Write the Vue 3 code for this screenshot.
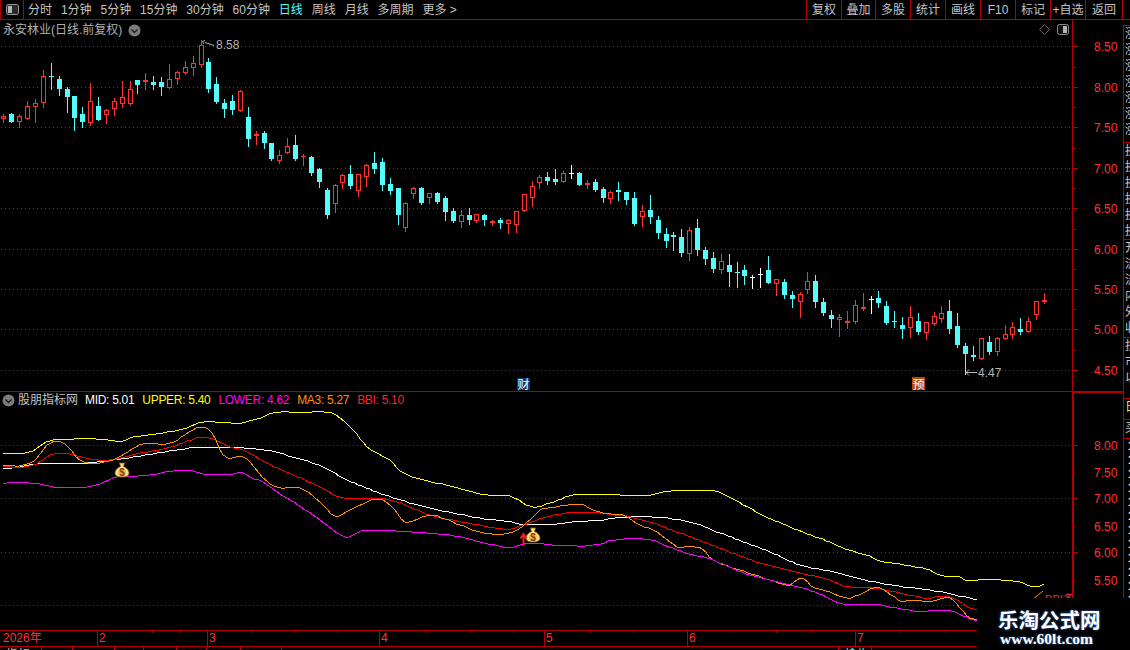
<template>
  <div class="app">
    <header class="toolbar">
      <div class="corner">
        <svg width="13" height="11" viewBox="0 0 13 11">
          <rect x="0.5" y="0.5" width="12" height="10" rx="2" fill="#2a2a2a" stroke="#9a9a9a" />
          <rect x="2" y="2" width="4" height="7" fill="#b4b4b4" />
        </svg>
      </div>
      <nav class="periods">
        <span v-for="p in periods" :key="p" class="period" :class="{ active: p === '日线' }">{{ p }}</span>
        <span class="period">更多 &gt;</span>
      </nav>
      <div class="actions">
        <span v-for="a in actions" :key="a.t" class="action" :style="{ width: a.w + 'px' }">{{ a.t }}</span>
      </div>
    </header>

    <div class="body">
      <div class="charts">
        <section class="panel main-panel">
          <svg class="plot" width="1123" height="371" viewBox="0 20 1123 371">
            <line v-for="g in mainGrid" :key="g.y" class="grid" x1="1" x2="1072" :y1="g.y + 0.5" :y2="g.y + 0.5" />
            <line class="axis" x1="1072.5" x2="1072.5" y1="20" y2="391" />
            <line v-for="g in mainGrid" :key="'t' + g.y" class="axis" x1="1072" x2="1078" :y1="g.y + 0.5" :y2="g.y + 0.5" />
            <line v-for="y in mainMinor" :key="y" class="axis" x1="1072" x2="1076" :y1="y + 0.5" :y2="y + 0.5" />
            <text v-for="g in mainGrid" :key="'l' + g.y" class="scale" x="1094" :y="g.y + 5">{{ g.l }}</text>

            <g v-for="c in candles" :key="c.i">
              <line :class="c.t" class="wick" :x1="c.x + 0.5" :x2="c.x + 0.5" :y1="c.hi" :y2="c.lo + 1" />
              <rect v-if="c.solid" :class="c.t" class="solid" :x="c.x - 2" :y="c.top" width="5" :height="c.h" />
              <rect v-else class="hollow" :x="c.x - 1.5" :y="c.top + 0.5" width="4" :height="c.h - 1" />
            </g>

            <path class="mark" d="M214 45.5 L205 42.5 M205 40.5 L202.5 41.5 L204 44" />
            <text class="peak" x="216" y="49">8.58</text>
            <path class="mark" d="M966 372.5 H977 M969 369.5 L966 372.5 L969 375.5" />
            <text class="peak" x="978" y="377">4.47</text>

            <rect x="517" y="378" width="13" height="12" fill="#0b3d73" />
            <text class="badge" x="517.5" y="389">财</text>
            <rect x="912" y="377" width="13" height="13" fill="#b8460c" />
            <text class="badge" x="912.5" y="388.5">预</text>
          </svg>

          <div class="stock-title">
            <span>永安林业(日线.前复权)</span>
            <svg width="13" height="13" viewBox="0 0 13 13">
              <circle cx="6.5" cy="6.5" r="6" fill="#7c7c7c" />
              <path d="M3.5 5.5 L6.5 8.5 L9.5 5.5" fill="none" stroke="#1c1c1c" stroke-width="1.4" />
            </svg>
          </div>
          <div class="corner-tools">
            <svg width="11" height="11" viewBox="0 0 11 11">
              <path d="M5.5 0.5 L10.5 5.5 L5.5 10.5 L0.5 5.5 Z" fill="none" stroke="#666" />
            </svg>
            <svg width="12" height="11" viewBox="0 0 12 11">
              <rect x="0.5" y="0.5" width="11" height="10" rx="2" fill="#111" stroke="#8a8a8a" />
              <rect x="6" y="2" width="4" height="7" fill="#b4b4b4" />
            </svg>
          </div>
        </section>

        <section class="panel sub-panel">
          <svg class="plot" width="1123" height="238" viewBox="0 392 1123 238">
            <line v-for="y in subDots" :key="y" class="grid" x1="1" x2="1072" :y1="y + 0.5" :y2="y + 0.5" />
            <rect x="1072" y="392" width="2" height="238" class="axis-fill" />
            <rect x="1074" y="392" width="49" height="1" class="axis-fill" />
            <line v-for="g in subScale" :key="'t' + g.y" class="axis" x1="1072" :x2="g.major ? 1078 : 1075" :y1="g.y + 0.5" :y2="g.y + 0.5" />
            <text v-for="g in subScale" :key="g.y" class="scale" x="1094" :y="g.y + 5">{{ g.l }}</text>

            <polyline v-for="s in series" :key="s.name" class="series" :stroke="s.color" :points="s.points" />

            <g v-for="b in bags" :key="b.x" :transform="`translate(${b.x},${b.y})`">
              <path d="M-2.5 -7 L2.5 -7 L1.5 -3.5 C5 -2 7 0.5 7 3 C7 6 4 7 0 7 C-4 7 -7 6 -7 3 C-7 0.5 -5 -2 -1.5 -3.5 Z" fill="#ffe08a" stroke="#8a6414" stroke-width="0.8" />
              <circle cx="0" cy="2.5" r="4" fill="#f5c04a" />
              <text class="bag-sign" x="0" y="6" text-anchor="middle">$</text>
            </g>
            <path d="M523.5 546 V535 M520.5 538.5 L523.5 534 L526.5 538.5" fill="none" stroke="#ff1a1a" stroke-width="2" />

            <path d="M1033 599 L1043 591" stroke="#ff9000" fill="none" />
            <text class="stub" x="1042" y="603">.BBI多</text>
          </svg>

          <div class="legend">
            <svg width="13" height="13" viewBox="0 0 13 13">
              <circle cx="6.5" cy="6.5" r="6" fill="#7c7c7c" />
              <path d="M3.5 5.5 L6.5 8.5 L9.5 5.5" fill="none" stroke="#1c1c1c" stroke-width="1.4" />
            </svg>
            <span class="legend-name">股朋指标网</span>
            <span v-for="l in legend" :key="l.t" class="legend-item" :style="{ color: l.c }">{{ l.t }}</span>
          </div>
        </section>
      </div>

      <aside class="side">
        <div v-for="(b, i) in sideBlocks" :key="i" class="side-block" :class="b.cls" :style="{ height: b.h + 'px' }">
          <span v-for="(r, j) in b.rows" :key="j">{{ r }}</span>
        </div>
      </aside>
    </div>

    <div class="dates">
      <span v-for="m in months" :key="m.t" class="month" :style="{ width: m.w + 'px' }">{{ m.t }}</span>
      <i v-for="t in dateTicks" :key="t" class="tick" :style="{ left: t + 'px' }" />
    </div>

    <div class="tabs">
      <span v-for="t in tabs" :key="t.x" class="tab" :class="{ on: t.on }" :style="{ width: t.w + 'px' }">{{ t.t }}</span>
    </div>

    <div class="watermark">
      <strong>乐淘公式网</strong>
      <em>www.60lt.com</em>
    </div>
  </div>
</template>

<script setup>
const periods = ["分时", "1分钟", "5分钟", "15分钟", "30分钟", "60分钟", "日线", "周线", "月线", "多周期"];
const actions = [
  { t: "复权", w: 35 },
  { t: "叠加", w: 34 },
  { t: "多股", w: 35 },
  { t: "统计", w: 35 },
  { t: "画线", w: 35 },
  { t: "F10", w: 35 },
  { t: "标记", w: 35 },
  { t: "+自选", w: 35 },
  { t: "返回", w: 37 },
];

const mainGrid = [
  { y: 46, l: "8.50" },
  { y: 87, l: "8.00" },
  { y: 127, l: "7.50" },
  { y: 168, l: "7.00" },
  { y: 208, l: "6.50" },
  { y: 249, l: "6.00" },
  { y: 289, l: "5.50" },
  { y: 329, l: "5.00" },
  { y: 370, l: "4.50" },
];
const mainMinor = [67, 107, 148, 188, 229, 269, 309, 350];

const subDots = [445, 498, 552, 605];
const subScale = [
  { y: 445, l: "8.00", major: true },
  { y: 472, l: "7.50" },
  { y: 498, l: "7.00", major: true },
  { y: 526, l: "6.50" },
  { y: 552, l: "6.00", major: true },
  { y: 580, l: "5.50" },
];

// type, high, body top, body bottom, low
const raw = [
  ["r",114,116,119,122],["c",113,114,122,122],["r",114,116,122,127],["r",101,106,119,119],
  ["r",99,103,107,122],["r",70,76,103,107],["c",63,76,77,89],["c",76,79,89,95],
  ["c",87,89,97,112],["c",96,96,118,130],["c",107,114,122,127],["r",83,101,123,125],
  ["c",97,106,120,120],["r",109,110,115,123],["r",98,101,109,115],["r",81,97,104,107],
  ["r",81,89,104,105],["c",80,80,85,93],["r",73,80,82,89],["c",76,82,85,89],
  ["c",77,82,87,95],["r",64,79,88,88],["r",71,72,79,84],["r",61,67,73,74],
  ["r",56,63,68,75],["r",40,45,65,67],["c",58,62,89,92],["c",77,84,102,103],
  ["c",99,103,109,117],["c",95,101,110,114],["r",90,91,111,111],["c",107,117,139,146],
  ["r",131,134,136,144],["c",131,133,143,148],["c",143,143,159,160],["r",150,155,161,163],
  ["r",138,146,153,153],["c",135,145,159,160],["r",154,156,157,165],["c",156,157,173,175],
  ["c",168,169,182,187],["c",188,190,215,218],["r",184,185,204,212],["r",174,175,183,188],
  ["c",165,174,186,188],["r",174,174,191,196],["r",164,165,177,186],["c",152,163,169,173],
  ["c",158,162,185,190],["c",178,184,191,194],["c",188,188,215,224],["r",202,203,228,231],
  ["r",187,188,194,198],["c",187,188,203,204],["r",193,193,198,203],["c",192,193,202,203],
  ["c",196,198,212,220],["c",208,211,221,222],["r",210,215,222,227],["c",208,215,220,224],
  ["r",214,214,221,222],["c",214,215,220,225],["r",220,221,223,225],["c",218,220,223,228],
  ["r",219,220,224,233],["r",211,211,225,232],["r",194,194,211,211],["r",181,186,198,206],
  ["r",175,177,183,188],["c",172,177,181,184],["c",169,179,182,184],["r",171,173,182,182],
  ["w",165,173,174,178],["c",172,173,185,185],["r",180,183,185,188],["c",179,182,190,191],
  ["c",187,189,198,202],["r",191,192,199,203],["c",182,190,192,200],["c",192,192,200,204],
  ["c",192,198,224,225],["r",205,211,217,226],["c",195,210,217,223],["c",216,220,233,238],
  ["c",228,234,241,247],["c",232,235,237,250],["c",229,237,253,256],["r",227,230,254,260],
  ["c",219,228,250,255],["c",247,250,259,264],["c",252,258,269,272],["r",254,261,270,273],
  ["c",254,265,272,286],["c",262,272,273,287],["c",265,270,276,284],["w",275,277,278,288],
  ["w",268,274,275,287],["c",256,270,283,283],["r",279,279,284,295],["c",279,282,295,298],
  ["c",291,295,299,307],["r",292,294,302,317],["r",272,281,290,293],["c",275,281,302,307],
  ["c",298,302,313,315],["c",310,315,319,327],["r",314,317,320,336],["r",311,321,323,328],
  ["r",300,305,322,323],["r",293,307,309,310],["w",296,299,300,313],["c",291,298,303,307],
  ["c",301,306,323,324],["c",311,321,322,327],["c",317,325,329,338],["r",306,317,328,337],
  ["c",313,321,332,334],["r",322,322,333,339],["r",312,316,324,325],["r",306,313,319,322],
  ["c",300,311,329,333],["c",313,326,345,347],["c",343,346,354,374],["c",346,355,357,360],
  ["r",338,338,359,359],["c",336,342,352,354],["r",337,338,352,355],["r",325,334,339,339],
  ["r",322,327,335,338],["c",318,329,332,334],["r",317,321,332,332],["r",301,301,315,319],
  ["r",293,300,302,303],
];
const candles = raw.map(([t, hi, top, bottom, lo], i) => ({
  i,
  t,
  hi,
  top,
  lo,
  x: Math.ceil(3 + i * 7.88235),
  h: Math.max(1, bottom - top),
  solid: t !== "r" || bottom - top <= 2,
}));

// curve through the read-off points, sampled every 4px so the lines bend like the reference
function pts(a) {
  const out = [];
  for (let k = 0; k < a.length - 1; k++) {
    const [x0, y0] = a[k];
    const [x1, y1] = a[k + 1];
    const prev = a[k - 1] || a[k];
    const next = a[k + 2] || a[k + 1];
    const m0 = ((y1 - prev[1]) / (x1 - prev[0])) * (x1 - x0);
    const m1 = ((next[1] - y0) / (next[0] - x0)) * (x1 - x0);
    const n = Math.max(1, Math.round((x1 - x0) / 4));
    for (let s = 0; s < n; s++) {
      const u = s / n;
      const y =
        (2 * u ** 3 - 3 * u ** 2 + 1) * y0 +
        (u ** 3 - 2 * u ** 2 + u) * m0 +
        (-2 * u ** 3 + 3 * u ** 2) * y1 +
        (u ** 3 - u ** 2) * m1;
      out.push(`${Math.round(x0 + (x1 - x0) * u)},${Math.round(y)}`);
    }
  }
  out.push(a[a.length - 1].join(","));
  return out.join(" ");
}

const series = [
  {
    name: "UPPER",
    color: "#ffff00",
    points: pts([[3,453],[17,453],[33,451],[43,444],[53,440],[70,439],[87,438],[100,439],[123,441],[133,437],[167,432],[187,428],[200,422],[223,422],[238,423],[257,419],[277,412],[300,412],[328,412],[340,418],[353,430],[367,447],[390,460],[400,471],[420,479],[450,486],[480,494],[510,496],[523,503],[533,507],[550,503],[573,495],[600,494],[647,495],[667,491],[693,490],[715,491],[735,500],[760,514],[790,527],[815,537],[830,542],[845,549],[870,556],[880,561],[900,564],[930,570],[940,575],[960,577],[965,580],[990,579],[1005,580],[1020,582],[1030,586],[1040,586],[1044,584]]),
  },
  {
    name: "MID",
    color: "#ffffff",
    points: pts([[3,468],[20,467],[33,464],[47,463],[80,463],[113,460],[157,453],[197,447],[213,447],[260,449],[300,459],[323,467],[347,480],[377,492],[397,499],[430,508],[480,518],[500,520],[523,524],[553,524],[580,521],[600,520],[623,517],[660,517],[693,523],[720,533],[770,552],[800,565],[830,571],[880,583],[930,590],[947,593],[977,600]]),
  },
  {
    name: "BBI",
    color: "#ff0000",
    points: pts([[3,466],[20,467],[37,464],[50,455],[63,453],[73,455],[90,459],[117,459],[140,453],[167,448],[183,443],[200,437],[213,439],[230,447],[243,450],[267,463],[293,475],[320,487],[340,497],[377,498],[397,502],[430,515],[480,525],[507,529],[523,525],[547,517],[573,512],[593,512],[607,514],[627,516],[653,523],[680,533],[707,543],[760,563],[800,573],[830,580],[843,586],[870,587],[900,593],[927,598],[943,596],[953,598],[970,608],[977,609]]),
  },
  {
    name: "MA3",
    color: "#ff9000",
    points: pts([[3,465],[23,465],[37,458],[47,445],[58,441],[68,447],[80,460],[100,463],[117,458],[143,444],[170,443],[200,427],[212,433],[223,455],[232,458],[240,456],[250,462],[263,478],[277,487],[300,488],[320,502],[335,516],[350,510],[375,499],[390,505],[405,522],[430,515],[460,525],[480,532],[500,534],[513,532],[530,520],[540,510],[560,506],[580,504],[593,510],[603,513],[623,515],[640,525],[657,532],[670,542],[680,548],[688,546],[702,549],[713,560],[740,570],[770,580],[790,585],[800,578],[815,588],[830,592],[847,598],[863,593],[877,587],[887,592],[902,602],[910,600],[933,601],[947,597],[953,600],[967,616],[977,620]]),
  },
  {
    name: "LOWER",
    color: "#ff00ff",
    points: pts([[3,483],[17,482],[40,484],[53,487],[83,487],[100,484],[117,477],[130,476],[157,474],[177,470],[193,471],[203,474],[233,474],[240,472],[250,477],[263,482],[280,494],[290,500],[320,520],[345,537],[365,530],[400,531],[450,535],[480,542],[507,547],[517,546],[527,543],[560,545],[593,545],[620,539],[647,539],[660,543],[677,550],[693,555],[707,558],[750,575],[790,585],[815,592],[830,599],[843,604],[873,604],[897,608],[917,611],[947,610],[963,616],[977,621]]),
  },
];
const bags = [
  { x: 122, y: 470 },
  { x: 533, y: 535 },
];

const legend = [
  { t: "MID: 5.01", c: "#ffffff" },
  { t: "UPPER: 5.40", c: "#ffff00" },
  { t: "LOWER: 4.62", c: "#ff00ff" },
  { t: "MA3: 5.27", c: "#ff9000" },
  { t: "BBI: 5.10", c: "#ff2020" },
];

const sideBlocks = [
  { h: 117, rows: ["涨", "涨", "涨", "涨", "涨", "涨", "涨"] },
  { h: 97, rows: ["换", "换", "换", "换", "换", "换"] },
  { h: 98, rows: ["开", "流", "流", "内", "外", "收"] },
  { h: 61, rows: ["技", "市", "以"] },
  { h: 21, cls: "gold", rows: ["日"] },
  { h: 19, rows: ["买"] },
  { h: 197, cls: "digits", rows: ["1", "1", "1", "1", "1", "1", "1", "1", "1", "1", "1", "1", "1", "1"] },
];

const months = [
  { t: "2026年", w: 97 },
  { t: "2", w: 110 },
  { t: "3", w: 172 },
  { t: "4", w: 165 },
  { t: "5", w: 143 },
  { t: "6", w: 168 },
  { t: "7", w: 122 },
];
const dateTicks = [125, 152, 180, 251, 294, 337, 426, 470, 513, 590, 633, 733, 776, 812, 899, 945];

const tabs = [
  { x: 0, t: "指标", w: 42 },
  { x: 42, t: "  。", w: 31 },
  { x: 73, t: "", w: 42 },
  { x: 115, t: "", w: 29 },
  { x: 144, t: "", w: 33 },
  { x: 177, t: "", w: 30 },
  { x: 207, t: "", w: 34 },
  { x: 241, t: "", w: 41 },
  { x: 282, t: "", w: 557 },
  { x: 839, t: "擒牛", w: 33, on: true },
];
</script>

<style>
html,
body {
  margin: 0;
  background: #000;
}
</style>

<style scoped>
.app {
  position: relative;
  width: 1130px;
  height: 650px;
  overflow: hidden;
  background: #000;
  color: #c4c4c4;
  font-family: "Liberation Sans", "Noto Sans CJK SC", sans-serif;
  font-size: 12px;
  line-height: 16px;
}

.toolbar {
  box-sizing: border-box;
  display: flex;
  align-items: stretch;
  height: 20px;
  border-bottom: 1px solid #b40000;
}

.corner {
  box-sizing: border-box;
  display: flex;
  align-items: center;
  justify-content: center;
  width: 24px;
  border-left: 1px solid #b40000;
  border-right: 1px solid #b40000;
  padding-bottom: 1px;
}

.periods {
  display: flex;
  align-items: center;
  gap: 8.9px;
  padding-left: 4px;
}

.period.active {
  color: #54fcfc;
}

.actions {
  display: flex;
  margin-left: auto;
  margin-right: 7px;
  border-right: 1px solid #b40000;
}

.action {
  box-sizing: border-box;
  display: flex;
  align-items: center;
  justify-content: center;
  border-left: 1px solid #b40000;
}

.body {
  display: flex;
  height: 610px;
}

.charts {
  width: 1123px;
}

.panel {
  position: relative;
}

.main-panel {
  height: 372px;
  border-bottom: 1px solid #b40000;
  box-sizing: border-box;
}

.sub-panel {
  height: 238px;
}

.plot {
  display: block;
}

.grid {
  stroke: #a81a1a;
  stroke-dasharray: 1 3;
  shape-rendering: crispEdges;
}

.axis {
  stroke: #b40000;
  shape-rendering: crispEdges;
}

.axis-fill {
  fill: #b40000;
}

.scale {
  fill: #ff3232;
  font-size: 12px;
  font-family: "Liberation Sans", sans-serif;
}

.stub {
  fill: #ff3232;
  font-size: 11px;
  font-family: "Liberation Sans", "Noto Sans CJK SC", sans-serif;
}

.wick {
  shape-rendering: crispEdges;
}

.wick.r {
  stroke: #ff3232;
}
.wick.c {
  stroke: #54fcfc;
}
.wick.w {
  stroke: #ffffff;
}

.solid {
  shape-rendering: crispEdges;
}
.solid.r {
  fill: #ff3232;
}
.solid.c {
  fill: #54fcfc;
}
.solid.w {
  fill: #ffffff;
}

.hollow {
  fill: #000;
  stroke: #ff3232;
  shape-rendering: crispEdges;
}

.mark {
  fill: none;
  stroke: #b8b8b8;
}

.peak {
  fill: #b4b4b4;
  font-size: 12px;
  font-family: "Liberation Sans", sans-serif;
}

.badge {
  fill: #fff;
  font-size: 12px;
  font-family: "Noto Sans CJK SC", sans-serif;
}

.series {
  fill: none;
  stroke-width: 1;
  shape-rendering: crispEdges;
}

.bag-sign {
  fill: #8a3a1a;
  font-size: 10px;
  font-weight: 700;
  font-family: "Liberation Sans", sans-serif;
}

.stock-title {
  position: absolute;
  top: 2px;
  left: 3px;
  display: flex;
  align-items: center;
  gap: 6px;
  color: #b0b0b0;
}

.corner-tools {
  position: absolute;
  top: 4px;
  left: 1039px;
  display: flex;
  gap: 7px;
}

.legend {
  position: absolute;
  top: 0;
  left: 2px;
  display: flex;
  align-items: center;
  gap: 8px;
}

.legend-name {
  margin-left: -5px;
  margin-right: -1px;
  color: #c4c4c4;
}

.legend-item {
  letter-spacing: -0.3px;
}

.side {
  box-sizing: border-box;
  width: 7px;
  height: 610px;
  margin-top: 5px;
  overflow: hidden;
  border-top: 1px solid #b40000;
  border-left: 1px solid #b40000;
}

.side-block {
  box-sizing: border-box;
  display: flex;
  flex-direction: column;
  padding-left: 1px;
  overflow: hidden;
  border-bottom: 1px solid #b40000;
  white-space: nowrap;
  color: #c8c8c8;
}

.side-block.gold {
  color: #e8e040;
}

.side-block.digits {
  padding-left: 4px;
  border-bottom: 0;
  line-height: 14px;
  font-weight: 700;
  color: #fff;
}

.dates {
  box-sizing: border-box;
  position: relative;
  display: flex;
  height: 17px;
  border-top: 1px solid #b40000;
  border-bottom: 1px solid #b40000;
}

.month {
  box-sizing: border-box;
  flex: none;
  padding-left: 1px;
  border-left: 1px solid #b40000;
  color: #ff3232;
  line-height: 15px;
}

.month:first-child {
  padding-left: 3px;
  border-left: 0;
}

.tick {
  position: absolute;
  top: 0;
  width: 1px;
  height: 2px;
  background: #b40000;
}

.tabs {
  display: flex;
  height: 3px;
  overflow: hidden;
}

.tab {
  box-sizing: border-box;
  flex: none;
  padding-left: 6px;
  border-right: 1px solid #b40000;
  overflow: hidden;
  white-space: pre;
  line-height: 16px;
}

.tab.on {
  color: #54fcfc;
}

.watermark {
  position: absolute;
  top: 598px;
  left: 977px;
  width: 153px;
  height: 52px;
  box-sizing: border-box;
  padding: 10px 0 0 21px;
  background: #000;
  color: #fff;
  text-shadow: 0 0 3px #3a6fc0;
}

.watermark strong {
  display: block;
  font-family: "Noto Sans CJK SC", sans-serif;
  font-size: 20.5px;
  line-height: 22px;
  font-weight: 700;
}

.watermark em {
  display: block;
  margin: 2px 0 0 2px;
  font-family: "Liberation Serif", serif;
  font-style: normal;
  font-weight: 700;
  font-size: 15.5px;
  line-height: 14px;
}
</style>
